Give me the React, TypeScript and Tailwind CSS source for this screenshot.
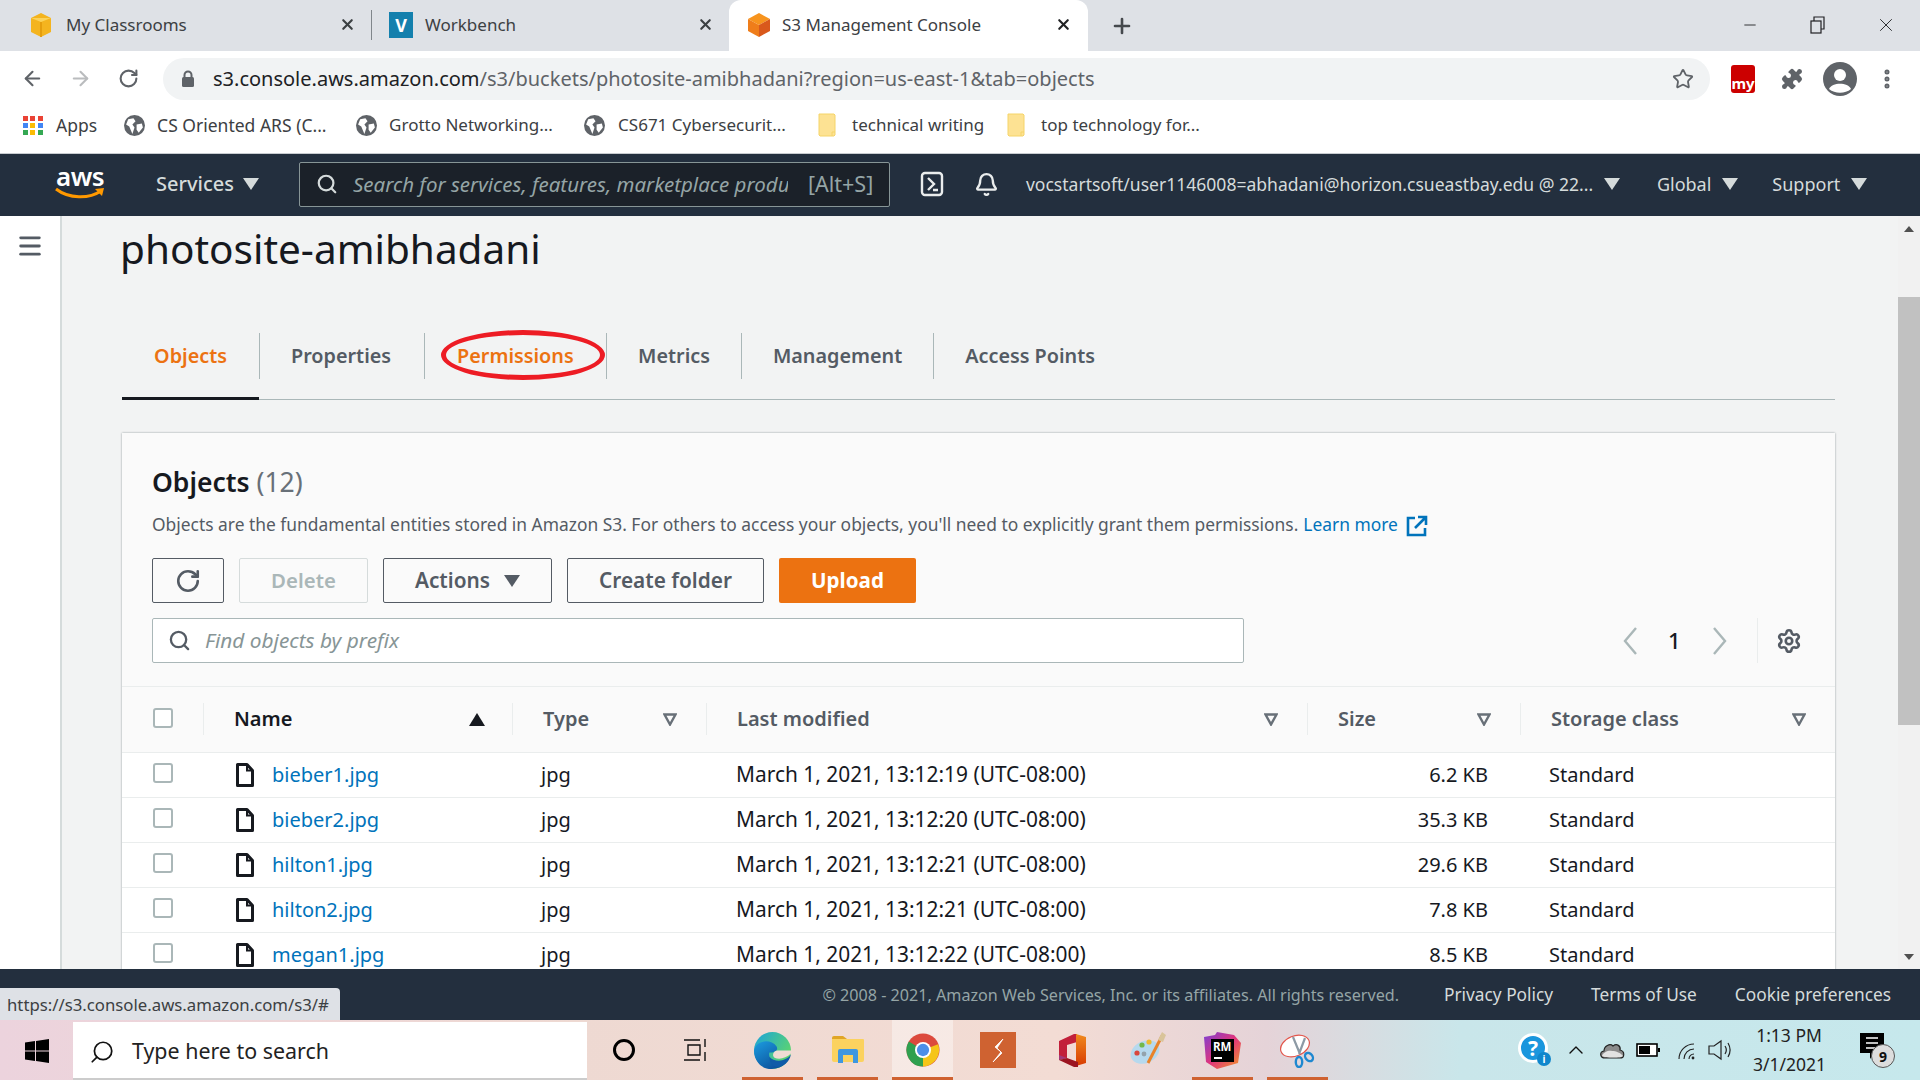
import type { ReactNode } from "react";
import { Bell, ArrowLeft, ArrowRight, RotateCw, Star, Puzzle, EllipsisVertical, Plus, X, Minus, Search, Menu, Settings, ChevronUp } from "lucide-react";

type Row = { name: string; date: string; size: string };

const rows: Row[] = [
  { name: "bieber1.jpg", date: "March 1, 2021, 13:12:19 (UTC-08:00)", size: "6.2 KB" },
  { name: "bieber2.jpg", date: "March 1, 2021, 13:12:20 (UTC-08:00)", size: "35.3 KB" },
  { name: "hilton1.jpg", date: "March 1, 2021, 13:12:21 (UTC-08:00)", size: "29.6 KB" },
  { name: "hilton2.jpg", date: "March 1, 2021, 13:12:21 (UTC-08:00)", size: "7.8 KB" },
  { name: "megan1.jpg", date: "March 1, 2021, 13:12:22 (UTC-08:00)", size: "8.5 KB" },
];

const cols = "grid grid-cols-[81px_309px_194px_601px_213px_1fr]";

function Cube({ top, left, right }: { top: string; left: string; right: string }) {
  return (
    <svg width="24" height="26" viewBox="0 0 24 26">
      <path d="M12 1 23 7 12 13 1 7Z" fill={top} />
      <path d="M1 7 12 13V25L1 19Z" fill={left} />
      <path d="M23 7 12 13V25L23 19Z" fill={right} />
    </svg>
  );
}

function Globe() {
  return (
    <svg width="21" height="21" viewBox="0 0 20 20">
      <circle cx="10" cy="10" r="10" fill="#5f6368" />
      <path d="M4 4 9 3 11 6 8 9 10 12 8 18 5 11 2 9ZM12 9 17 8 18 12 14 17 12 14Z" fill="#fff" />
    </svg>
  );
}

function Folder() {
  return (
    <svg width="18" height="24" viewBox="0 0 18 24">
      <path d="M1 1H16L17 2V22L16 23H2L1 22Z" fill="#fde293" stroke="#f5d468" />
      <path d="M14 23V19H17" fill="none" stroke="#f5d468" />
    </svg>
  );
}

function Caret({ className }: { className: string }) {
  return (
    <svg width="16" height="12" viewBox="0 0 16 12" className={className}>
      <path d="M0 0H16L8 12Z" fill="currentColor" />
    </svg>
  );
}

function FilterCaret() {
  return (
    <svg width="14" height="13" viewBox="0 0 14 13">
      <path d="M1.5 1.5H12.5L7 11.5Z" fill="none" stroke="#687078" strokeWidth="2.4" />
    </svg>
  );
}

function FileIcon() {
  return (
    <svg width="18" height="24" viewBox="0 0 18 24">
      <path d="M1.5 1.5H11L16.5 7.5V22.5H1.5Z" fill="#fff" stroke="#16191f" strokeWidth="3" strokeLinejoin="round" />
      <path d="M11 2V7.5H16" fill="none" stroke="#16191f" strokeWidth="2" />
    </svg>
  );
}

function Check() {
  return <div className="w-[20px] h-[20px] rounded-[3px] border-2 border-[#aab7b8] bg-white" />;
}

function AppsIcon() {
  const colors = ["#ea4335", "#ea4335", "#ea4335", "#4285f4", "#fbbc04", "#4285f4", "#34a853", "#fbbc04", "#34a853"];
  return (
    <div className="grid grid-cols-3 gap-[2px] w-[20px]">
      {colors.map((c, i) => (
        <div key={i} className="h-[5px] w-[5px]" style={{ background: c }} />
      ))}
    </div>
  );
}

function BrowserChrome() {
  return (
    <>
      <div className="h-[51px] bg-[#dee1e6] flex items-center text-[17px] text-[#3c4043] shrink-0">
        <div className="w-[372px] h-full flex items-center pl-[30px] pb-[2px]">
          <svg width="22" height="26" viewBox="0 0 22 26">
            <path d="M11 1 21 6V20L11 25 1 20V6Z" fill="#f4b41f" />
            <path d="M11 10V25" stroke="#e59e0e" strokeWidth="2" />
            <path d="M1 6 11 10 21 6" fill="#fbd25b" />
          </svg>
          <span className="ml-[14px]">My Classrooms</span>
          <X size={17} strokeWidth={3} className="ml-auto mr-[15px]" />
          <div className="w-px h-[30px] bg-[#80868b]" />
        </div>
        <div className="w-[357px] h-full flex items-center pl-[17px] pb-[2px]">
          <div className="w-[24px] h-[26px] bg-[#1480ad] flex items-center justify-center text-white font-bold text-[18px] leading-none">V</div>
          <span className="ml-[12px]">Workbench</span>
          <X size={17} strokeWidth={3} className="ml-auto mr-[15px]" />
        </div>
        <div className="w-[359px] h-full bg-white rounded-t-[12px] flex items-center pl-[18px] pb-[2px]">
          <Cube top="#f7941e" left="#ef7d1a" right="#d9591c" />
          <span className="ml-[11px]">S3 Management Console</span>
          <X size={17} strokeWidth={3} className="ml-auto mr-[16px] text-[#202124]" />
        </div>
        <Plus size={24} strokeWidth={2.6} className="ml-[22px] text-[#45494d]" />
        <div className="ml-auto flex items-center text-[#202124] pb-[2px]">
          <Minus size={18} strokeWidth={1.2} />
          <svg width="18" height="18" viewBox="0 0 18 18" className="ml-[50px]" fill="none" stroke="#202124" strokeWidth="1.2">
            <rect x="2" y="5" width="10" height="12" />
            <path d="M5 5V1H15V13H12" />
          </svg>
          <X size={22} strokeWidth={1} className="ml-[48px] mr-[23px]" />
        </div>
      </div>

      <div className="h-[55px] bg-white flex items-center shrink-0 text-[#5f6368]">
        <ArrowLeft size={23} strokeWidth={2.2} className="ml-[21px]" />
        <ArrowRight size={23} strokeWidth={2.2} className="ml-[25px] text-[#babcbe]" />
        <RotateCw size={21} strokeWidth={2.4} className="ml-[26px]" />
        <div className="ml-[24px] w-[1547px] h-[42px] rounded-full bg-[#f1f3f4] flex items-center">
          <svg width="14" height="18" viewBox="0 0 14 18" className="ml-[18px]">
            <path d="M3.5 8V5a3.5 3.5 0 0 1 7 0V8" fill="none" stroke="#5f6368" strokeWidth="2" />
            <rect x="1" y="7" width="12" height="10" rx="1.5" fill="#5f6368" />
          </svg>
          <div className="ml-[18px] text-[20px] whitespace-nowrap">
            <span className="text-[#202124]">s3.console.aws.amazon.com</span>
            <span>/s3/buckets/photosite-amibhadani?region=us-east-1&amp;tab=objects</span>
          </div>
          <Star size={22} strokeWidth={2} className="ml-auto mr-[16px]" />
        </div>
        <div className="ml-[21px] w-[24px] h-[28px] rounded-[3px] bg-[#cc0000] text-white text-[15px] font-bold flex items-end justify-center leading-[20px]">my</div>
        <Puzzle size={24} strokeWidth={0} fill="#5f6368" className="ml-[25px]" />
        <svg width="34" height="34" viewBox="0 0 34 34" className="ml-[19px]">
          <circle cx="17" cy="17" r="17" fill="#5f6368" />
          <circle cx="17" cy="13" r="6" fill="#fff" />
          <path d="M6 27C9 20 25 20 28 27 22 32 12 32 6 27Z" fill="#fff" />
        </svg>
        <EllipsisVertical size={24} strokeWidth={3} className="ml-[18px]" />
      </div>

      <div className="h-[48px] pb-[9px] bg-white flex items-center shrink-0 text-[17px] text-[#3c4043] border-b border-[#c8ccd0]">
        <div className="ml-[23px]"><AppsIcon /></div>
        <span className="ml-[13px] text-[17.5px]">Apps</span>
        <div className="ml-[27px]"><Globe /></div>
        <span className="ml-[12px] w-[199px] whitespace-nowrap text-[17.5px]">CS Oriented ARS (C...</span>
        <Globe />
        <span className="ml-[12px] w-[195px] whitespace-nowrap">Grotto Networking...</span>
        <Globe />
        <span className="ml-[13px] w-[200px] whitespace-nowrap">CS671 Cybersecurit...</span>
        <Folder />
        <span className="ml-[16px] w-[155px] whitespace-nowrap">technical writing</span>
        <Folder />
        <span className="ml-[16px] whitespace-nowrap">top technology for...</span>
      </div>
    </>
  );
}

function TopNav() {
  return (
    <div className="h-[62px] bg-[#232f3e] flex items-center shrink-0 text-[#d5dbdb] pb-[2px]">
      <div className="ml-[55px] w-[50px] h-[40px] flex flex-col items-center text-white">
        <span className="text-[26px] leading-[24px] font-semibold tracking-[-0.5px]">aws</span>
        <svg width="50" height="13" viewBox="0 0 50 13" className="mt-[-1px]">
          <path d="M1 2C14 12 34 12 46 4" fill="none" stroke="#ff9900" strokeWidth="3" />
          <path d="M40 2 49 1 47 9" fill="#ff9900" />
        </svg>
      </div>
      <span className="ml-[51px] text-[20px] font-medium">Services</span>
      <Caret className="ml-[9px] text-[#d5dbdb]" />
      <div className="ml-[40px] w-[591px] h-[45px] bg-[#1b2129] border border-[#879596] rounded-[2px] flex items-center text-[#95a5a6]">
        <Search size={22} strokeWidth={2.4} className="ml-[16px] text-[#d5dbdb]" />
        <span className="ml-[15px] w-[435px] overflow-hidden whitespace-nowrap italic text-[20.5px]">Search for services, features, marketplace produ</span>
        <span className="ml-[20px] text-[21.5px] whitespace-nowrap">[Alt+S]</span>
      </div>
      <svg width="24" height="26" viewBox="0 0 24 26" className="ml-[30px]" fill="none" stroke="#eaeded" strokeWidth="2.4">
        <rect x="2" y="2" width="20" height="22" rx="3" />
        <path d="M8 7 14 13 8 19M13 19H18" />
      </svg>
      <Bell size={25} strokeWidth={2.2} className="ml-[30px] text-[#eaeded]" />
      <span className="ml-[27px] w-[568px] whitespace-nowrap text-[17.55px]">vocstartsoft/user1146008=abhadani@horizon.csueastbay.edu @ 22...</span>
      <Caret className="ml-[10px]" />
      <span className="ml-[37px] text-[18px]">Global</span>
      <Caret className="ml-[11px]" />
      <span className="ml-[34px] text-[18px]">Support</span>
      <Caret className="ml-[11px]" />
    </div>
  );
}

function Tabs() {
  const other = "px-[31px] border-l border-[#aab7b8] h-[46px] flex items-center text-[#545b64]";
  return (
    <div className="mt-[50px] h-[82px] w-[1713px] border-b border-[#aab7b8] flex text-[19.8px] font-semibold">
      <div className="w-[137px] pt-[15px] h-[82px] border-b-[3px] border-[#16191f] flex justify-center">
        <div className="h-[46px] flex items-center text-[#ec7211]">Objects</div>
      </div>
      <div className="flex pt-[15px]">
        <div className="pl-[31px] pr-[33px] border-l border-[#aab7b8] h-[46px] flex items-center text-[#545b64]">Properties</div>
        <div className="w-[182px] pl-[32px] border-l border-[#aab7b8] h-[46px] flex items-center text-[#ec7211] relative">
          Permissions
          <div className="absolute left-[16px] top-[-3px] w-[164px] h-[50px] rounded-[50%] border-[5px] border-[#ed1c24]" />
        </div>
        <div className={other}>Metrics</div>
        <div className={other}>Management</div>
        <div className={other}>Access Points</div>
      </div>
    </div>
  );
}

function Toolbar() {
  const btn = "h-[45px] border border-[#545b64] rounded-[2px] text-[20.8px] font-semibold flex items-center justify-center text-[#545b64]";
  return (
    <div className="flex mt-[19px] ml-[30px] gap-[15px] h-[45px]">
      <div className={`${btn} w-[72px]`}>
        <RotateCw size={26} strokeWidth={2.4} />
      </div>
      <div className="h-[45px] w-[129px] border border-[#d5dbdb] rounded-[2px] text-[20.4px] font-semibold flex items-center justify-center text-[#aab7b8]">Delete</div>
      <div className={`${btn} w-[169px] gap-[14px]`}>
        Actions
        <Caret className="text-[#545b64]" />
      </div>
      <div className={`${btn} w-[197px]`}>Create folder</div>
      <div className="h-[45px] w-[137px] bg-[#ec7211] rounded-[2px] text-[20.6px] font-bold flex items-center justify-center text-white">Upload</div>
    </div>
  );
}

function ObjectsCard() {
  const sep = "border-l border-[#eaeded] h-[32px] flex items-center";
  return (
    <div className="mt-[33px] w-[1713px] bg-[#fafafa] shadow-[0_0_2px_rgba(0,28,36,0.4)]">
      <div className="pt-[34px] pl-[30px] text-[26.5px] leading-[30px] font-semibold text-[#16191f]">
        Objects <span className="font-normal text-[#687078]">(12)</span>
      </div>
      <div className="mt-[12px] pl-[30px] h-[30px] flex items-center text-[17.4px] text-[#545b64] whitespace-nowrap">
        <span>Objects are the fundamental entities stored in Amazon S3. For others to access your objects, you'll need to explicitly grant them permissions.</span>
        <span className="ml-[5px] text-[#0073bb]">Learn more</span>
        <svg width="22" height="22" viewBox="0 0 22 22" className="ml-[8px] mt-[3px]" fill="none" stroke="#0073bb" strokeWidth="2.6">
          <path d="M9 3H2V20H19V13M12 2H20V10M20 2 9 13" />
        </svg>
      </div>
      <Toolbar />
      <div className="mt-[15px] ml-[30px] h-[45px] flex items-center">
        <div className="w-[1092px] h-[45px] bg-white border border-[#aab7b8] rounded-[2px] flex items-center">
          <Search size={23} strokeWidth={2.4} className="ml-[15px] text-[#545b64]" />
          <span className="ml-[14px] text-[20.8px] italic text-[#879596]">Find objects by prefix</span>
        </div>
        <svg width="16" height="28" viewBox="0 0 16 28" className="ml-[378px]" fill="none" stroke="#aab7b8" strokeWidth="2.4">
          <path d="M14 1 3 14 14 27" />
        </svg>
        <span className="ml-[30px] w-[14px] text-[22px] font-medium text-[#16191f]">1</span>
        <svg width="16" height="28" viewBox="0 0 16 28" className="ml-[30px]" fill="none" stroke="#aab7b8" strokeWidth="2.4">
          <path d="M2 1 13 14 2 27" />
        </svg>
        <div className="ml-[29px] h-[45px] border-l border-[#eaeded]" />
        <Settings size={26} strokeWidth={2.4} className="ml-[18px] text-[#545b64]" />
      </div>

      <div className={`${cols} mt-[23px] h-[67px] pb-[1px] items-center border-t border-b border-[#eaeded] text-[20px] font-semibold text-[#545b64]`}>
        <div className="pl-[31px] pb-[2px]"><Check /></div>
        <div className={`${sep} pl-[30px] pr-[27px] justify-between text-[#16191f]`}>
          Name
          <svg width="16" height="13" viewBox="0 0 16 13"><path d="M8 0 16 13H0Z" fill="#16191f" /></svg>
        </div>
        <div className={`${sep} pl-[30px] pr-[29px] justify-between`}>Type<FilterCaret /></div>
        <div className={`${sep} pl-[30px] pr-[29px] justify-between`}>Last modified<FilterCaret /></div>
        <div className={`${sep} pl-[30px] pr-[29px] justify-between`}>Size<FilterCaret /></div>
        <div className={`${sep} pl-[30px] pr-[29px] justify-between`}>Storage class<FilterCaret /></div>
      </div>

      {rows.map((r) => (
        <div key={r.name} className={`${cols} h-[45px] items-center bg-white border-b border-[#eaeded] text-[20px] text-[#16191f]`}>
          <div className="pl-[31px] pb-[5px]"><Check /></div>
          <div className="pl-[33px] flex items-center">
            <FileIcon />
            <span className="ml-[18px] text-[#0073bb]">{r.name}</span>
          </div>
          <div className="pl-[29px]">jpg</div>
          <div className="pl-[30px] text-[20.9px] whitespace-nowrap">{r.date}</div>
          <div className="pr-[32px] text-right">{r.size}</div>
          <div className="pl-[29px]">Standard</div>
        </div>
      ))}
    </div>
  );
}

function Footer() {
  return (
    <div className="h-[51px] pt-[1px] bg-[#232f3e] flex items-center justify-end pr-[29px] shrink-0 text-[17.3px] text-[#d5dbdb] relative">
      <span className="text-[16.15px] text-[#95a5a6]">© 2008 - 2021, Amazon Web Services, Inc. or its affiliates. All rights reserved.</span>
      <span className="ml-[45px]">Privacy Policy</span>
      <span className="ml-[38px]">Terms of Use</span>
      <span className="ml-[38px]">Cookie preferences</span>
      <div className="absolute left-0 bottom-0 w-[340px] h-[32px] bg-[#dee1e6] rounded-tr-[4px] pl-[7px] pt-[1px] flex items-center text-[16.75px] text-[#3c4043] whitespace-nowrap">https://s3.console.aws.amazon.com/s3/#</div>
    </div>
  );
}

function TaskIcon({ active, light, children }: { active?: boolean; light?: boolean; children: ReactNode }) {
  return (
    <div className={`w-[61px] mx-[7px] h-[60px] flex items-center justify-center relative ${light ? "bg-white/40" : ""}`}>
      {children}
      {active ? <div className="absolute left-0 right-0 bottom-0 h-[3px] bg-[#cf6231]" /> : null}
    </div>
  );
}

function Taskbar() {
  return (
    <div className="h-[60px] bg-[linear-gradient(90deg,#ecd3dd_0%,#eed9d2_30%,#f3dcd4_55%,#e5d3d8_66%,#c9e6ea_76%,#c6e8ec_100%)] flex items-center shrink-0 text-[#111]">
      <div className="w-[73px] flex justify-center pt-[2px]">
        <svg width="24" height="24" viewBox="0 0 24 24"><path d="M0 3.5 10 2V11.5H0ZM11 2 24 0V11.5H11ZM0 12.5H10V22L0 20.5ZM11 12.5H24V24L11 22Z" fill="#000" /></svg>
      </div>
      <div className="w-[514px] h-[58px] bg-white flex items-center mt-[2px] border-b-2 border-[#ccc] pt-[3px]">
        <Search size={26} strokeWidth={1.6} className="ml-[16px] -scale-x-100" />
        <span className="ml-[17px] text-[21.4px] text-[#222]">Type here to search</span>
      </div>
      <div className="w-[73px] flex justify-center">
        <div className="w-[22px] h-[22px] rounded-full border-[3px] border-black" />
      </div>
      <div className="w-[75px] flex justify-center pr-[3px]">
        <svg width="24" height="24" viewBox="0 0 24 24" fill="none" stroke="#111" strokeWidth="1.4">
          <path d="M0 2H16M4 7H16V17H4ZM0 22H16M21 1V9M21 14V23" />
        </svg>
      </div>
      <TaskIcon active>
        <svg width="37" height="37" viewBox="0 0 36 36">
          <defs>
            <linearGradient id="edgeTop" x1="0" y1="0" x2="1" y2="0.6">
              <stop offset="0" stopColor="#1ba3dc" />
              <stop offset="1" stopColor="#5ed66c" />
            </linearGradient>
            <linearGradient id="edgeLow" x1="0" y1="0" x2="0.7" y2="1">
              <stop offset="0" stopColor="#1c9de0" />
              <stop offset="1" stopColor="#0c4f9a" />
            </linearGradient>
          </defs>
          <circle cx="18" cy="18" r="18" fill="url(#edgeTop)" />
          <path d="M0 18C2 8 16 6 22 14 24 18 20 20 15 20 13 27 21 31 31 30 24 38 10 38 4 30 1 26 0 22 0 18Z" fill="url(#edgeLow)" />
          <path d="M36 21C31 26 24 27 20 25 17 23 19 18 23 18L36 18Z" fill="#efdcd4" />
          <path d="M36 22C34 30 28 34 24 34 18 34 15 30 15 24 19 29 30 30 36 22Z" fill="#0f5ba8" />
        </svg>
      </TaskIcon>
      <TaskIcon active>
        <svg width="32" height="28" viewBox="0 0 32 28">
          <path d="M0 2Q0 0 2 0H11L15 3H0Z" fill="#e0a526" />
          <path d="M0 3H31Q32 3 32 4V24Q32 26 30 26H2Q0 26 0 24Z" fill="#fbd25f" />
          <path d="M6 27V15Q6 13 8 13H24Q26 13 26 15V27H21V19H11V27Z" fill="#3f97e0" />
        </svg>
      </TaskIcon>
      <TaskIcon active light>
        <svg width="34" height="34" viewBox="0 0 36 36">
          <circle cx="18" cy="18" r="17.5" fill="#dc4a3d" />
          <path d="M18 18 34 12A17.5 17.5 0 0 1 18 35.5Z" fill="#f5c518" />
          <path d="M18 18 18 35.5A17.5 17.5 0 0 1 3 9Z" fill="#2fa04f" />
          <circle cx="18" cy="18" r="8.5" fill="#fff" />
          <circle cx="18" cy="18" r="6.5" fill="#4d8fe8" />
        </svg>
      </TaskIcon>
      <TaskIcon>
        <svg width="36" height="36" viewBox="0 0 36 36">
          <rect width="36" height="36" fill="#cf6231" />
          <path d="M23 7 15 15 21 20 13 30 22 21 17 16Z" fill="#fff" stroke="#fff" strokeWidth="0.8" strokeLinejoin="round" />
        </svg>
      </TaskIcon>
      <TaskIcon>
        <svg width="27" height="35" viewBox="0 0 27 35">
          <defs>
            <linearGradient id="officeRight" x1="0" y1="0" x2="0" y2="1">
              <stop offset="0" stopColor="#f08a1e" />
              <stop offset="1" stopColor="#d83b01" />
            </linearGradient>
          </defs>
          <path d="M0 8 15 1 18 1V9L8 12V25L0 27Z" fill="#c2203a" />
          <path d="M0 22 8 25 0 27Z" fill="#a23a7a" />
          <path d="M17 1 27 4V30L17 33Z" fill="url(#officeRight)" />
          <path d="M0 27 8 25 19 29V34L15 34Z" fill="#9c1420" />
        </svg>
      </TaskIcon>
      <TaskIcon>
        <svg width="36" height="36" viewBox="0 0 36 36">
          <ellipse cx="15" cy="20" rx="15" ry="11" transform="rotate(-25 15 20)" fill="#b6d9ee" />
          <circle cx="7" cy="21" r="2.6" fill="#d8483e" />
          <circle cx="12" cy="13" r="2.6" fill="#72b84a" />
          <circle cx="19" cy="10" r="2.6" fill="#efb92e" />
          <circle cx="14" cy="22" r="2.4" fill="#93a3ad" />
          <path d="M32 4 18 31" stroke="#e8832a" strokeWidth="3" />
          <path d="M28 8 32 0 36 3 33 10Z" fill="#d9c49a" />
        </svg>
      </TaskIcon>
      <TaskIcon active>
        <svg width="37" height="37" viewBox="0 0 37 37">
          <defs>
            <linearGradient id="rmBack" x1="0" y1="0" x2="1" y2="1">
              <stop offset="0" stopColor="#7a3fd6" />
              <stop offset="0.5" stopColor="#e0347c" />
              <stop offset="1" stopColor="#f59a22" />
            </linearGradient>
          </defs>
          <path d="M0 5 11 3 13 0 30 3 37 11 34 31 13 37 2 30Z" fill="url(#rmBack)" />
          <rect x="7" y="7" width="23" height="23" fill="#000" />
          <text x="9" y="19" fill="#fff" fontSize="11.5" fontWeight="700">RM</text>
          <rect x="10" y="25" width="8" height="2" fill="#fff" />
        </svg>
      </TaskIcon>
      <TaskIcon active>
        <svg width="36" height="36" viewBox="0 0 36 36" fill="none">
          <ellipse cx="15" cy="14" rx="15" ry="10" transform="rotate(-22 15 14)" fill="#fff" stroke="#e2564c" strokeWidth="1.2" />
          <path d="M13 5 20 22M25 6 19 22" stroke="#8d9aa5" strokeWidth="2.2" />
          <ellipse cx="19" cy="30" rx="3.2" ry="5" stroke="#1e88d0" strokeWidth="2.4" />
          <ellipse cx="29" cy="25" rx="3.4" ry="4.6" transform="rotate(-40 29 25)" stroke="#1e88d0" strokeWidth="2.4" />
        </svg>
      </TaskIcon>
      <div className="ml-[183px] w-[30px] h-[30px] rounded-full bg-[#1a96dd] border-[3px] border-white flex items-center justify-center text-white font-bold text-[21px] leading-none relative mt-[-4px]">
        ?
        <div className="absolute right-[-6px] bottom-[-6px] w-[14px] h-[14px] rounded-full bg-[#0f86cc] text-white text-[10px] flex items-center justify-center">i</div>
      </div>
      <ChevronUp size={24} strokeWidth={1.4} className="ml-[16px]" />
      <svg width="26" height="18" viewBox="0 0 26 18" className="ml-[11px]">
        <path d="M6 17C1 17 0 11 5 10 5 5 11 2 14 5 18 2 22 5 21 9 26 10 26 17 21 17Z" fill="#8b8b8b" stroke="#222" strokeWidth="1.2" />
        <path d="M3 15C4 11 10 9 13 10 17 10 22 12 24 15 23 17 6 17 3 15Z" fill="#e2e2e2" />
      </svg>
      <svg width="24" height="14" viewBox="0 0 24 14" className="ml-[11px]">
        <rect x="1" y="1" width="20" height="12" fill="#fff" stroke="#000" strokeWidth="1.6" />
        <rect x="3" y="3" width="11" height="8" fill="#000" />
        <rect x="22" y="5" width="2" height="4" fill="#000" />
      </svg>
      <svg width="20" height="19" viewBox="0 0 20 19" className="ml-[16px]" fill="none" stroke="#222" strokeWidth="1.1">
        <path d="M13 18A5 5 0 0 1 18 13M8 18A10 10 0 0 1 18 8M3 18A15 15 0 0 1 18 3" />
        <circle cx="17" cy="17" r="1.4" fill="#222" stroke="none" />
      </svg>
      <svg width="24" height="22" viewBox="0 0 24 22" className="ml-[12px]" fill="none" stroke="#222" strokeWidth="1.2">
        <path d="M1 7H6L13 2V20L6 15H1Z" />
        <path d="M17 7C19 10 19 12 17 15M20 4C23 9 23 13 20 18" />
      </svg>
      <div className="ml-[21px] w-[72px] text-center text-[17.5px] leading-[29px] text-[#222] whitespace-nowrap">
        <div>1:13 PM</div>
        <div>3/1/2021</div>
      </div>
      <div className="ml-[35px] relative w-[30px] h-[34px]">
        <svg width="24" height="28" viewBox="0 0 24 28">
          <path d="M0 0H24V20H14L10 26V20H0Z" fill="#000" />
          <path d="M6 5H18M6 10H18M6 15H18" stroke="#fff" strokeWidth="1.4" />
        </svg>
        <div className="absolute left-[11px] top-[11px] w-[24px] h-[24px] rounded-full bg-[#ddd] border border-[#555] flex items-center justify-center text-[14px] font-bold">9</div>
      </div>
    </div>
  );
}

function Scrollbar() {
  return (
    <div className="w-[22px] bg-[#f1f1f1] flex flex-col items-center shrink-0">
      <div className="h-[25px] flex items-center justify-center">
        <svg width="10" height="6" viewBox="0 0 10 6"><path d="M5 0 10 6H0Z" fill="#505050" /></svg>
      </div>
      <div className="w-full h-[428px] mt-[56px] bg-[#c1c1c1]" />
      <div className="mt-auto h-[25px] flex items-center justify-center">
        <svg width="10" height="6" viewBox="0 0 10 6"><path d="M5 6 10 0H0Z" fill="#505050" /></svg>
      </div>
    </div>
  );
}

export default function App() {
  return (
    <div className="w-[1920px] h-[1080px] flex flex-col overflow-hidden bg-white font-['Noto_Sans',sans-serif]">
      <BrowserChrome />
      <TopNav />
      <div className="flex-1 min-h-0 flex overflow-hidden">
        <div className="w-[62px] bg-white border-r-2 border-[#d5dbdb] shrink-0 flex justify-center pt-[16px]">
          <Menu size={28} strokeWidth={2.4} className="text-[#545b64]" />
        </div>
        <div className="flex-1 min-w-0 bg-[#f2f3f3] overflow-hidden">
          <div className="pl-[60px]">
            <h1 className="pt-[7px] h-[52px] -ml-[2px] text-[40.5px] leading-[52px] text-[#16191f] font-normal whitespace-nowrap">photosite-amibhadani</h1>
            <Tabs />
            <ObjectsCard />
          </div>
        </div>
        <Scrollbar />
      </div>
      <Footer />
      <Taskbar />
    </div>
  );
}
